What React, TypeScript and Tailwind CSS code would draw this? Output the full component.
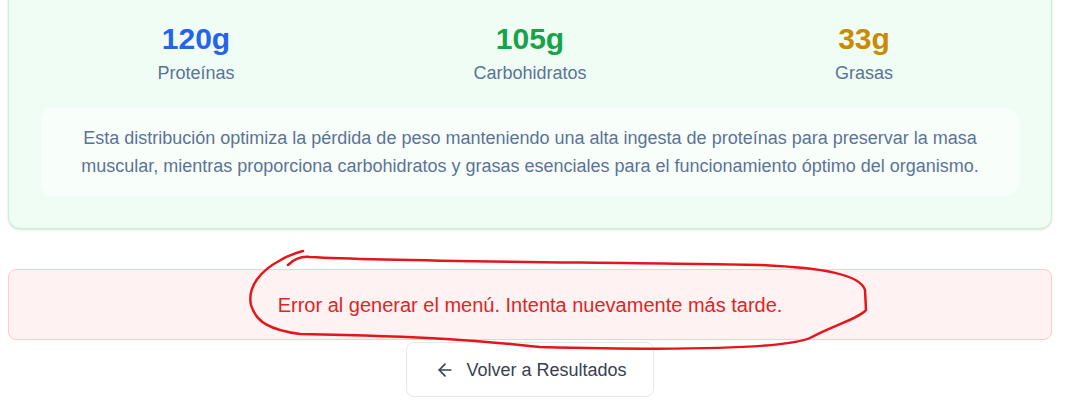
import React from "react";
import { ArrowLeft } from "lucide-react";

export default function App() {
  const macros = [
    { v: "120g", l: "Proteínas", c: "text-[#2563eb]" },
    { v: "105g", l: "Carbohidratos", c: "text-[#16a34a]" },
    { v: "33g", l: "Grasas", c: "text-[#ca8a04]" },
  ];
  return (
    <div className="relative w-[1072px] h-[413px] overflow-hidden bg-white font-['Liberation_Sans',Arial,sans-serif]">
      <div className="pl-2 pr-5 -mt-3">
        <div className="rounded-xl border border-[#c6f1d4] bg-[#f0fdf4] p-8 shadow-sm">
          <div className="grid grid-cols-3 gap-6 text-center">
            {macros.map((m) => (
              <div key={m.l}>
                <div className={`text-3xl font-bold ${m.c}`}>{m.v}</div>
                <div className="mt-[2px] text-lg text-[#5b7398]">{m.l}</div>
              </div>
            ))}
          </div>
          <div className="mt-[21px] rounded-xl bg-white/50 px-5 py-4 text-center text-lg text-[#5b7398]">
            Esta distribución optimiza la pérdida de peso manteniendo una alta ingesta de proteínas para preservar la masa muscular, mientras proporciona carbohidratos y grasas esenciales para el funcionamiento óptimo del organismo.
          </div>
        </div>
        <div className="mt-10 flex h-[71px] items-center justify-center rounded-lg border border-[#fecaca] bg-[#fef2f2] text-xl text-[#dc2626]">
          Error al generar el menú. Intenta nuevamente más tarde.
        </div>
        <div className="mt-[2px] flex justify-center">
          <button className="flex h-[55px] items-center gap-[11px] rounded-lg border border-[#e5e7eb] bg-white pl-7 pr-[26px] text-lg text-[#374151]">
            <ArrowLeft size={20} strokeWidth={2} />
            <span>Volver a Resultados</span>
          </button>
        </div>
      </div>
      <svg
        className="pointer-events-none absolute left-0 top-0"
        width="1072"
        height="413"
        viewBox="0 0 1072 413"
      >
        <path
          d="M 288 265 C 294 259, 300 256, 310 257 C 400 262, 600 262, 760 265 C 822 268, 860 274, 865 290 L 866 310 C 860 318, 832 326, 812 337 C 792 348, 700 351, 540 347 C 480 341, 450 337, 300 334 C 270 330, 256 322, 251 305 C 247 286, 262 270, 279 261 C 287 256, 295 253, 303 251"
          fill="none"
          stroke="#e3161b"
          strokeWidth="2.5"
          strokeLinecap="round"
          strokeLinejoin="round"
        />
      </svg>
    </div>
  );
}
